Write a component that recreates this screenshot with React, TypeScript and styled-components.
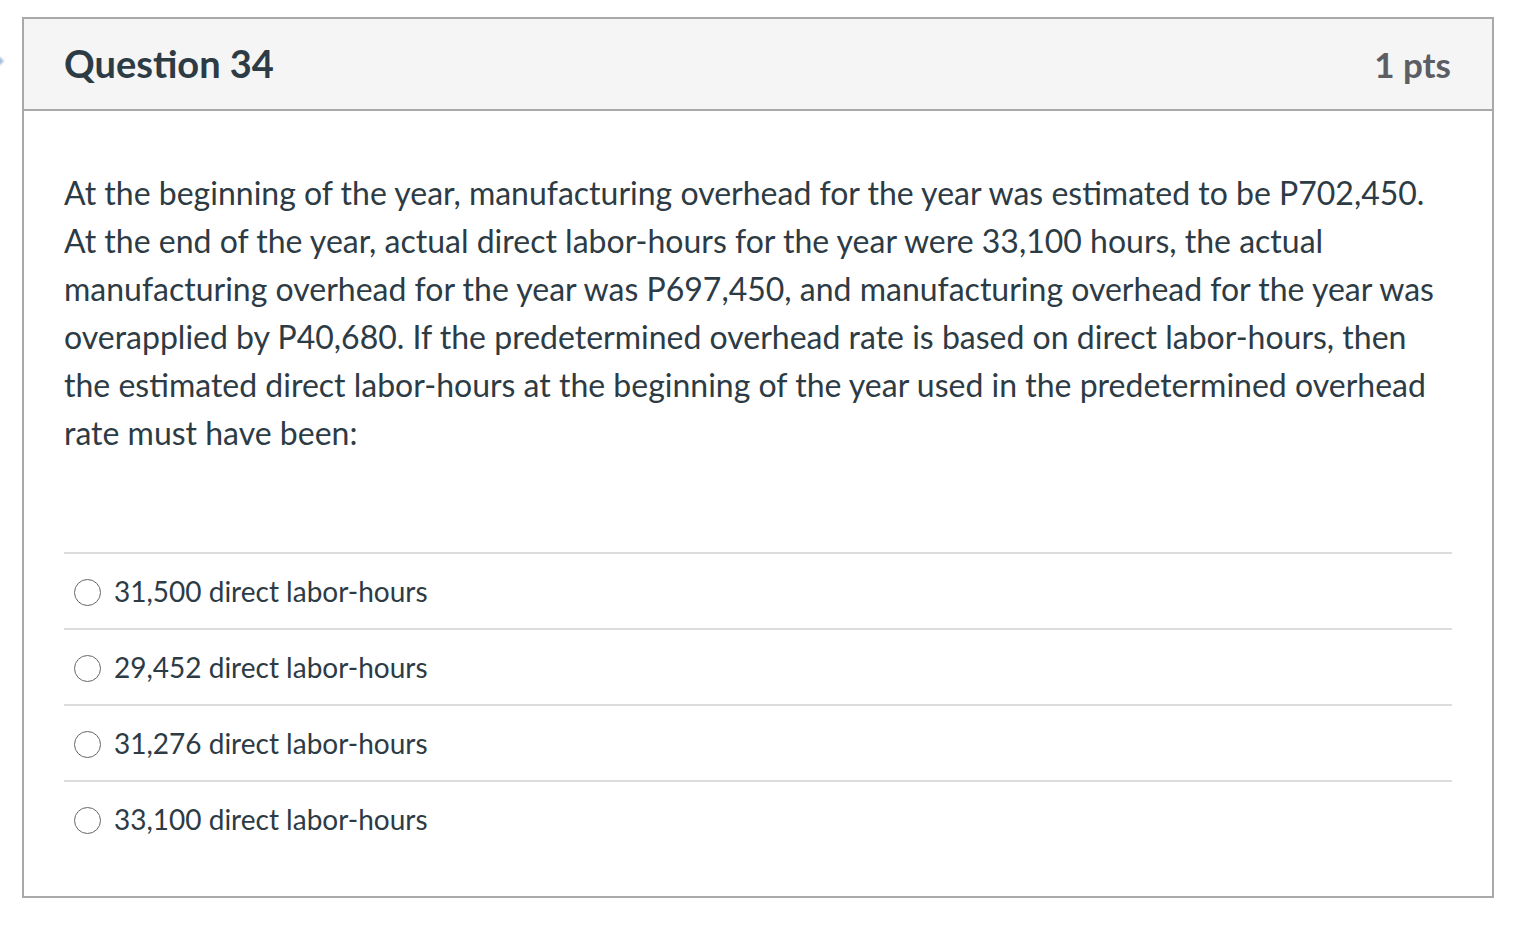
import styled, { createGlobalStyle } from "styled-components";

const GlobalStyle = createGlobalStyle`
  html, body {
    margin: 0;
    padding: 0;
    background: #fff;
  }
  body {
    font-family: Lato, "Open Sans", sans-serif;
    color: #2d3b45;
  }
`;

const Page = styled.div`
  position: relative;
  padding: 17px 36px 0 22px;
`;

const SideArrow = styled.svg`
  position: absolute;
  left: -6px;
  top: 52px;
  filter: blur(1px);
`;

const Card = styled.div`
  width: 1472px;
  box-sizing: border-box;
  border: 2px solid #a9a9a9;
  background: #fff;
`;

const Header = styled.div`
  display: flex;
  align-items: center;
  justify-content: space-between;
  height: 90px;
  padding: 0 41px 0 40px;
  background: #f5f5f5;
  border-bottom: 2px solid #a9a9a9;
`;

const Title = styled.h2`
  margin: 0;
  font-size: 38px;
  font-weight: 700;
  color: #2d3b45;
  padding-bottom: 2px;
`;

const Points = styled.span`
  font-size: 35px;
  font-weight: 700;
  color: #5b5e62;
`;

const Body = styled.div`
  padding: 58px 40px 40px 40px;
`;

const QuestionText = styled.p`
  margin: 0 0 95px 0;
  font-size: 32px;
  line-height: 48px;
  color: #2d3b45;
`;

const Answers = styled.div`
  display: flex;
  flex-direction: column;
`;

const AnswerRow = styled.label`
  display: flex;
  align-items: center;
  gap: 13px;
  height: 74px;
  padding-left: 10px;
  border-top: 2px solid #dcdcdc;
  font-size: 28px;
  color: #2d3b45;
`;

const Radio = styled.span`
  display: inline-block;
  box-sizing: border-box;
  width: 27px;
  height: 27px;
  border: 1.6px solid #666;
  border-radius: 50%;
  margin-top: 2px;
`;

const answers = [
  "31,500 direct labor-hours",
  "29,452 direct labor-hours",
  "31,276 direct labor-hours",
  "33,100 direct labor-hours",
];

export default function App() {
  return (
    <>
      <GlobalStyle />
      <Page>
        <SideArrow width="12" height="18" viewBox="0 0 12 18">
          <path d="M0 0 L10 9 L0 18 Z" fill="#9fb8d8" />
        </SideArrow>
        <Card>
          <Header>
            <Title>Question 34</Title>
            <Points>1 pts</Points>
          </Header>
          <Body>
            <QuestionText>
              At the beginning of the year, manufacturing overhead for the year was
              estimated to be P702,450. At the end of the year, actual direct
              labor-hours for the year were 33,100 hours, the actual manufacturing
              overhead for the year was P697,450, and manufacturing overhead for the
              year was overapplied by P40,680. If the predetermined overhead rate is
              based on direct labor-hours, then the estimated direct labor-hours at
              the beginning of the year used in the predetermined overhead rate must
              have been:
            </QuestionText>
            <Answers>
              {answers.map((a) => (
                <AnswerRow key={a}>
                  <Radio />
                  {a}
                </AnswerRow>
              ))}
            </Answers>
          </Body>
        </Card>
      </Page>
    </>
  );
}
